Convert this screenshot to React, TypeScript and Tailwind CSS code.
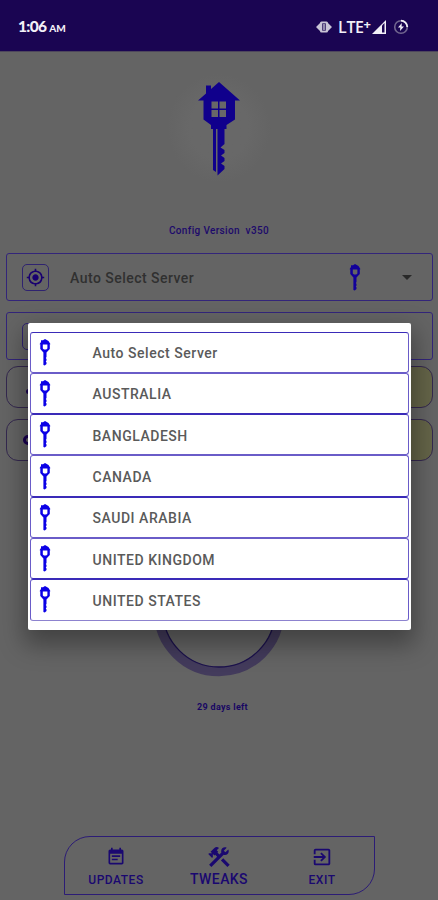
import type { ReactNode } from 'react'
import { MdEventNote, MdExitToApp, MdMyLocation } from 'react-icons/md'

const SERVERS = [
  'Auto Select Server',
  'AUSTRALIA',
  'BANGLADESH',
  'CANADA',
  'SAUDI ARABIA',
  'UNITED KINGDOM',
  'UNITED STATES',
]

function HouseKey({ className }: { className?: string }) {
  return (
    <svg viewBox="0 0 42 94" className={className} fill="currentColor">
      <path
        fillRule="evenodd"
        d="M0 18.500L8 11.500V3.500H13V7L21 0L42 18.500H37V37.500L28.500 43V47H26.500V62L22.500 65.500L26.500 68V71L23 73.500L26.500 76V79L23 81.500L26.500 84V87L19.500 93.500V47H18V90L15 88V47H13V43L5.500 37.500V18.500ZM13.500 19.500V26.500H20V19.500ZM21.500 19.500V26.500H28V19.500ZM13.500 28V35H20V28ZM21.500 28V35H28V28Z"
      />
    </svg>
  )
}

// Same key with a single large window, readable at list size
function SmallKey({ className }: { className?: string }) {
  return (
    <svg viewBox="0 0 12 27" className={className} fill="currentColor">
      <path
        fillRule="evenodd"
        d="M0.500 5.200L2 3V1.200H4V1.300L6 0L9.500 2L11.500 5.200H10.800V10L7.500 13.500V18L6.800 19L7.500 20V21.500L6.800 22.500L7.500 23.500V25L5.800 26.500L4.400 26V13.500L1.300 10V5.200ZM3.800 5.500V9.500L5 10.500H7.200L8.400 9.500V5.500Z"
      />
    </svg>
  )
}

function HammerWrench({ className }: { className?: string }) {
  return (
    <svg viewBox="0 0 24 24" className={className} fill="currentColor">
      <path d="M13.780 15.300L19.780 21.300L21.890 19.140L15.890 13.140L13.780 15.300M17.500 10.100C17.110 10.100 16.690 10.050 16.360 9.910L4.970 21.250L2.860 19.140L10.270 11.740L8.500 9.960L7.780 10.660L6.330 9.250V12.110L5.630 12.810L2.110 9.250L2.810 8.550H5.620L4.220 7.140L7.780 3.580C8.950 2.410 10.830 2.410 12 3.580L9.890 5.740L11.300 7.140L10.590 7.850L12.380 9.630L14.200 7.750C14.060 7.420 14 7 14 6.630C14 4.660 15.560 3.110 17.500 3.110C18.090 3.110 18.610 3.250 19.080 3.530L16.410 6.200L17.910 7.700L20.580 5.030C20.860 5.500 21 6 21 6.630C21 8.550 19.450 10.100 17.500 10.100Z" />
    </svg>
  )
}

function StatusBar() {
  return (
    <header className="flex h-[52px] shrink-0 items-center justify-between border-b border-[#4d465c] bg-[#1a0552] pl-[18px] pr-[29px] pt-[2px] font-['Lato',sans-serif] text-[#f2f0f7]">
      <div className="flex items-baseline gap-[3px] font-black">
        <span className="text-[15.500px] tracking-[-0.700px]">1:06</span>
        <span className="text-[10px]">AM</span>
      </div>
      <div className="flex items-center">
        <svg viewBox="0 0 16 12" className="h-3 w-4" fill="#c9c4d6">
          <path d="M0 6L4.500 1.500V10.500ZM16 6L11.500 1.500V10.500Z" />
          <rect x="4" y="0.500" width="8" height="11" rx="1.500" />
          <rect x="6.300" y="2.300" width="3.400" height="7.400" fill="#1a0552" />
          <rect x="7.300" y="2.800" width="1.400" height="6.400" />
        </svg>
        <span className="ml-[6px] font-['Open_Sans',sans-serif] text-[16px] font-semibold leading-none tracking-[-0.400px]">LTE</span>
        <span className="-mt-[5px] font-['Open_Sans',sans-serif] text-[13px] font-bold leading-none">+</span>
        <svg viewBox="0 0 14 14" className="ml-px h-3.5 w-3.5">
          <path d="M0 14L14 0V14Z" fill="#f2f0f7" />
          <path d="M10 5.500L12.500 3V12.500H10Z" fill="#1a0552" />
        </svg>
        <svg viewBox="0 0 16 16" className="ml-[7px] h-4 w-4" fill="none">
          <circle cx="8" cy="8" r="6.300" stroke="#71668f" strokeWidth="1.600" />
          <path d="M8 1.700A6.300 6.300 0 0 1 14.300 8" stroke="#f2f0f7" strokeWidth="1.800" />
          <path d="M8.800 4L5 8.500H7.300L7 12L11 7.500H8.600Z" fill="#f2f0f7" />
        </svg>
      </div>
    </header>
  )
}

function NavItem({ icon, label, large }: { icon: ReactNode; label: string; large?: boolean }) {
  return (
    <div className="flex flex-1 flex-col items-center">
      <div className="flex h-6 items-center">{icon}</div>
      <span
        className={
          large
            ? 'mt-px text-[14px] leading-[18px] tracking-[0.400px]'
            : 'mt-[2px] text-[12px] leading-[18px] tracking-[0.500px]'
        }
      >
        {label}
      </span>
    </div>
  )
}

function ServerDialog() {
  return (
    <div className="absolute left-[28px] top-[322.500px] w-[382.500px] rounded-[2px] bg-white px-[1.500px] py-[9px] shadow-[0_11px_24px_4px_rgba(0,0,0,0.34)]">
      <ul>
        {SERVERS.map((server) => (
          <li
            key={server}
            className="flex h-[41.300px] items-center rounded-[3px] border border-[#6a5cc8] odd:border-t-[#3a2bb8] even:border-b-[#3a2bb8] first:border-t-[#8d83cf] last:border-b-[#8d83cf] pl-[8px]"
          >
            <SmallKey className="h-[27px] w-[12px] text-[#0b00e6]" />
            <span className="ml-[42px] pt-[3px] text-[14px] font-medium tracking-[0.530px] text-[#5a5a5a]">{server}</span>
          </li>
        ))}
      </ul>
    </div>
  )
}

export default function App() {
  return (
    <div className="relative flex h-[900px] w-[438px] flex-col overflow-hidden bg-[#646464] font-['Roboto',sans-serif]">
      <StatusBar />

      <main className="flex flex-1 flex-col items-center">
        <div className="mt-[21px] flex h-[110px] w-[104px] justify-center rounded-full bg-radial from-[#686868] from-40% to-[#646464] to-70% pt-[9px]">
          <HouseKey className="h-[94px] w-[42px] text-[#10008c]" />
        </div>
        <p className="mt-[41px] h-[14px] whitespace-pre text-[10px] font-medium leading-[14px] tracking-[0.350px] text-[#1d0a6b]">
          Config Version  v350
        </p>

        <section className="mt-[15px] flex w-full flex-col pl-[6px] pr-[5px]">
          <div className="flex h-[48px] items-center rounded-[3px] border border-[#33257a] pl-[15px] pr-[20px]">
            <div className="flex h-[27px] w-[27px] items-center justify-center rounded-[5px] border border-[#2f2370]">
              <MdMyLocation className="h-[19px] w-[19px] text-[#190070]" />
            </div>
            <span className="ml-[21px] pt-[2px] text-[14px] font-medium tracking-[0.470px] text-[#303030]">Auto Select Server</span>
            <SmallKey className="ml-auto h-[27px] w-[12px] text-[#12009a]" />
            <div className="ml-[41px] h-0 w-0 border-x-[5px] border-t-[5px] border-x-transparent border-t-[#292929]" />
          </div>
          <div className="mt-[11px] flex h-[48px] items-center rounded-[3px] border border-[#33257a] pl-[15px]">
            <div className="flex h-[27px] w-[27px] items-center justify-center rounded-[5px] border border-[#2f2370]">
              <div className="h-4 w-4 rounded-full bg-[#190070]" />
            </div>
          </div>
          <div className="mt-[6px] flex h-[42px] items-center rounded-[12px] border border-[#34284f] bg-linear-to-r from-[#646464] from-50% to-[#646448] to-95% pl-[19px]">
            <div className="mt-[9px] h-[5px] w-3 rounded-full bg-[#190050]" />
          </div>
          <div className="mt-[11px] flex h-[42px] items-center rounded-[12px] border border-[#34284f] bg-linear-to-r from-[#646464] from-50% to-[#646448] to-95% pl-[16px]">
            <div className="h-[10px] w-3 rounded-full border-[3px] border-[#190050]" />
          </div>
        </section>

        <svg viewBox="0 0 132 132" className="mt-[84px] h-[132px] w-[132px]" fill="none">
          <circle cx="66" cy="66" r="60.500" stroke="#433b5c" strokeWidth="9.500" />
          <circle cx="66" cy="66" r="56" stroke="#1c124c" strokeWidth="1.300" />
        </svg>
        <p className="ml-[7px] mt-[23px] text-[9px] font-bold leading-[14px] tracking-[0.300px] text-[#180763]">29 days left</p>

        <nav className="mb-[5px] mt-auto flex h-[59px] w-[311px] rounded-br-[26px] rounded-tl-[26px] border border-[#2c1c76] pt-[8px] font-medium text-[#1a0870]">
          <NavItem icon={<MdEventNote className="h-5 w-5" />} label="UPDATES" />
          <NavItem icon={<HammerWrench className="h-[26px] w-[26px]" />} label="TWEAKS" large />
          <NavItem icon={<MdExitToApp className="h-[22px] w-[22px]" />} label="EXIT" />
        </nav>
      </main>

      <ServerDialog />
    </div>
  )
}
